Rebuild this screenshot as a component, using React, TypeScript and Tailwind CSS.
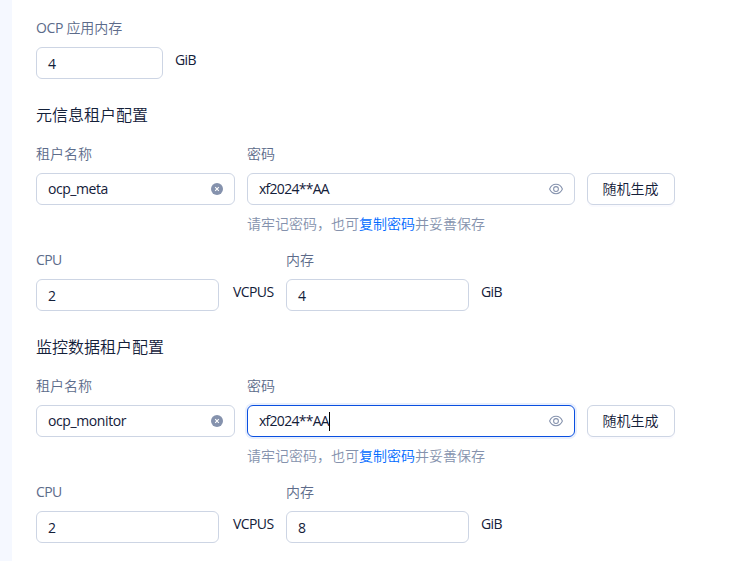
import React from "react";

const field = "flex h-8 shrink-0 items-center rounded-[6px] border border-[#cdd5e4] bg-white text-sm text-[#132039]";

function ClearIcon() {
  return (
    <svg width="12" height="12" viewBox="0 0 12 12" className="mr-[11px] shrink-0">
      <circle cx="6" cy="6" r="6" fill="#8592ad" />
      <path d="M4.2 4.2l3.6 3.6M7.8 4.2L4.2 7.8" stroke="#fff" strokeWidth="1.1" />
    </svg>
  );
}

function EyeIcon() {
  return (
    <svg width="14" height="12" viewBox="0 0 14 12" fill="none" stroke="#8592ad" className="mr-[11px] shrink-0">
      <path d="M.6 6C2 2.7 4.2 1.3 7 1.3S12 2.7 13.4 6C12 9.3 9.8 10.7 7 10.7S2 9.3.6 6z" strokeWidth="1.05" />
      <circle cx="7" cy="6" r="2.4" strokeWidth="1.05" />
    </svg>
  );
}

function Label({ children }: { children: React.ReactNode }) {
  return <div className="h-[22px] whitespace-nowrap text-sm leading-[22px] text-[#5c6b8a]">{children}</div>;
}

function NumberBox({ value, width }: { value: string; width: string }) {
  return (
    <div className={`${field} ${width} pl-[11px]`}>
      <span className="pt-[2px] font-normal">{value}</span>
    </div>
  );
}

function Unit({ children }: { children: React.ReactNode }) {
  return (
    <span className="mt-[2px] h-[22px] text-sm leading-[22px] font-normal tracking-[-0.6px] text-[#132039]">
      {children}
    </span>
  );
}

function Tenant({ title, name, memory, focused }: { title: string; name: string; memory: string; focused?: boolean }) {
  return (
    <section className="h-[232px]">
      <h2 className="h-6 text-base leading-6 font-[350] text-[#132039]">{title}</h2>
      <div className="mt-4 flex gap-3">
        <div className="w-[199px]">
          <Label>租户名称</Label>
          <div className={`${field} mt-2 justify-between pl-[11px]`}>
            <span className={`font-normal ${focused ? "tracking-[-0.4px]" : "tracking-[-0.45px]"}`}>{name}</span>
            <ClearIcon />
          </div>
        </div>
        <div className="w-[328px]">
          <Label>密码</Label>
          <div
            className={`flex h-8 items-center justify-between rounded-[6px] border bg-white pl-[11px] text-sm text-[#132039] mt-2 ${
              focused ? "border-[#0a4fe0] shadow-[0_0_0_2px_#e8effd]" : "border-[#cdd5e4]"
            }`}
          >
            <span className="flex items-center font-normal tracking-[-0.73px]">
              xf2024**AA
              {focused && <i className="h-[19px] w-px bg-black" />}
            </span>
            <EyeIcon />
          </div>
          <p className="mt-2 h-[22px] whitespace-nowrap text-sm leading-[22px] text-[#8592ad]">
            请牢记密码，也可<a className="text-[#006aff]">复制密码</a>并妥善保存
          </p>
        </div>
        <button className={`${field} mt-[30px] w-[88px] justify-center pr-px shadow-[0_2px_0_#fafafe]`}>随机生成</button>
      </div>
      <div className="mt-[14px] flex">
        <div className="w-[250px]">
          <Label>
            <span className="font-normal tracking-[-0.6px]">CPU</span>
          </Label>
          <div className="mt-2 flex gap-[14px]">
            <NumberBox value="2" width="w-[183px]" />
            <Unit>VCPUS</Unit>
          </div>
        </div>
        <div>
          <Label>内存</Label>
          <div className="mt-2 flex gap-3">
            <NumberBox value={memory} width="w-[183px]" />
            <Unit>GiB</Unit>
          </div>
        </div>
      </div>
    </section>
  );
}

export default function App() {
  return (
    <div className="flex h-[561px] w-[756px] overflow-hidden bg-white font-['Open_Sans','Noto_Sans_CJK_SC',sans-serif] font-[350]">
      <aside className="w-3 shrink-0 bg-[#f5f8ff]" />
      <main className="flex-1 pt-[17px] pl-6">
        <Label>
          <span className="font-normal tracking-[-0.35px]">OCP </span>应用内存
        </Label>
        <div className="mt-2 flex gap-3">
          <NumberBox value="4" width="w-[127px]" />
          <Unit>GiB</Unit>
        </div>
        <div className="mt-6">
          <Tenant title="元信息租户配置" name="ocp_meta" memory="4" />
          <Tenant title="监控数据租户配置" name="ocp_monitor" memory="8" focused />
        </div>
      </main>
    </div>
  );
}
